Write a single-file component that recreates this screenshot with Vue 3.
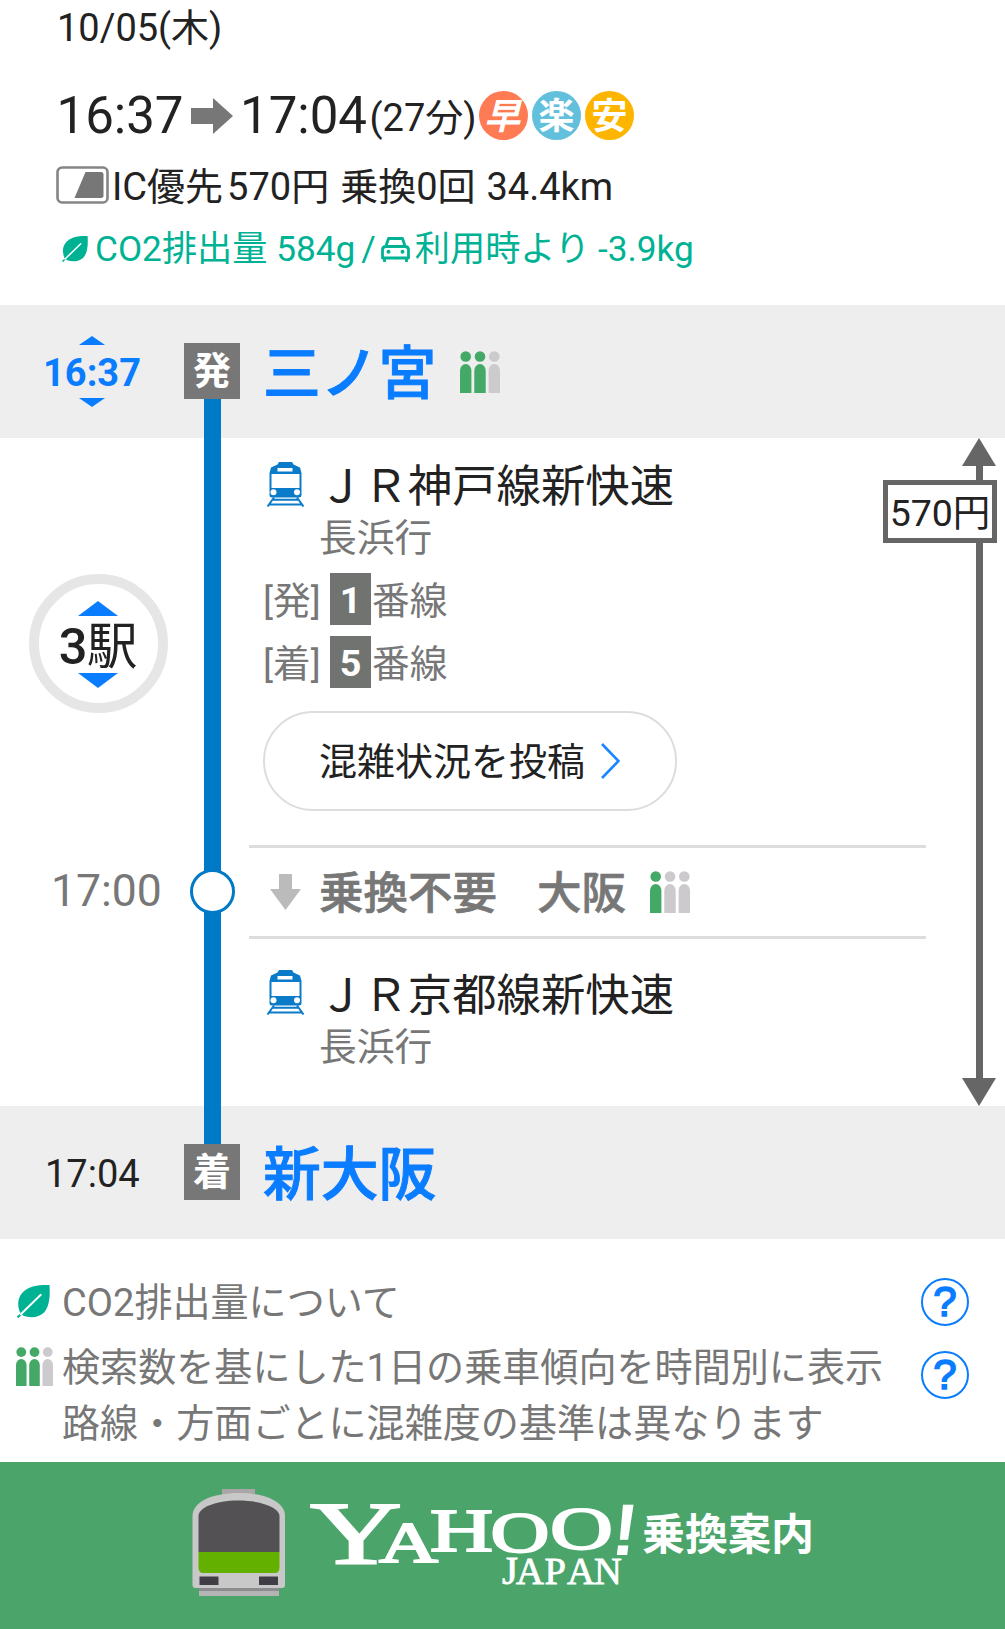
<script setup>
import { h } from 'vue'

const crowdIcon = (props) =>
  h('svg', { viewBox: '0 0 40 42', preserveAspectRatio: 'none' },
    [0, 1, 2].map((i) => {
      const fill = i < props.level ? '#44a866' : '#cccacc'
      const x = i * 14.3
      return h('g', { fill }, [
        h('circle', { cx: x + 5.7, cy: 5.5, r: 5.3 }),
        h('path', { d: `M${x} 42V19.5a5.7 6.5 0 0 1 11.4 0V42Z` }),
      ])
    }))
crowdIcon.props = ['level']

const LeafIcon = () =>
  h('svg', { viewBox: '0 0 33 33' }, [
    h('path', { fill: '#00b294', d: 'M32.500 0C20 -.500 12 1.500 6 7C0 13 .500 21 2.800 27L6 30.500C13 33.500 22 32.500 27 27.500C32.500 21.500 33.200 11 32.500 0Z' }),
    h('path', { stroke: '#00b294', 'stroke-width': 2, d: 'M.6 32.400L5 28.300' }),
    h('path', { stroke: '#fff', 'stroke-width': 1.9, 'stroke-linecap': 'round', d: 'M3.800 29.300L23.800 9.800' }),
  ])

const TrainIcon = () =>
  h('svg', { viewBox: '0 0 39 45' }, [
    h('path', { fill: '#0a7bc9', 'fill-rule': 'evenodd', d: 'M13 0H26L27.500 2.500L34 5.500L35.500 11V33Q35.500 35.500 33 35.500H6Q3.500 35.500 3.500 33V11L5 5.500L11.500 2.500ZM11.500 6V9.500H26.500V6ZM5.500 12V26H33.500V12Z' }),
    h('circle', { cx: 7.5, cy: 30.3, r: 3, fill: '#fff' }),
    h('circle', { cx: 31, cy: 30.3, r: 3, fill: '#fff' }),
    h('path', { fill: 'none', stroke: '#0a7bc9', 'stroke-width': 2, d: 'M8 35.500L1.500 44.500M31 35.500L37.500 44.500M6.500 37.800H32.500M3 42.500H36' }),
  ])

const platforms = [
  { kind: '発', number: 1 },
  { kind: '着', number: 5 },
]

// The wordmark is stretched horizontally, so x is given in unstretched units
const stretch = 1.43
const letters = [
  { c: 'Y', x: 310, y: 1563.5, s: 89 },
  { c: 'A', x: 379, y: 1562, s: 57 },
  { c: 'H', x: 430, y: 1551.5, s: 61 },
  { c: 'O', x: 490.5, y: 1552, s: 57 },
  { c: 'O', x: 550, y: 1549, s: 61 },
]
</script>

<template>
  <div class="page">
    <header class="summary">
      <div class="date">10/05(木)</div>
      <div class="times">
        <span>16:37</span>
        <svg class="to" viewBox="0 0 42 36"><path fill="#777" d="M0 10H22V0L42 18L22 36V26H0Z" /></svg>
        <span>17:04</span>
        <span class="duration">(27分)</span>
        <span class="tag fast">早</span>
        <span class="tag easy">楽</span>
        <span class="tag cheap">安</span>
      </div>
      <div class="fare">
        <svg class="card" viewBox="0 0 53 38">
          <rect x="1.500" y="1.500" width="50" height="35" rx="4.500" fill="#fff" stroke="#858585" stroke-width="2.600" />
          <path fill="#777" d="M29.500 6H45Q47.500 6 47.500 8.500V29.500Q47.500 32 45 32H18.500Z" />
        </svg>
        <span class="ic">IC優先</span><span class="yen">570円</span><span class="change">乗換0回</span><span>34.4km</span>
      </div>
      <div class="co2">
        <LeafIcon class="leaf-small" />
        <span>CO2排出量 584g</span><span class="slash">/</span>
        <svg class="car" viewBox="0 0 29 25" fill="none" stroke="#00b294" stroke-width="2.800" stroke-linejoin="round">
          <path d="M5 9L7.500 1.500H21.500L24 9M1.500 21V13Q1.500 9.500 5 9.500H24Q27.500 9.500 27.500 13V21ZM3.500 21V25M25.500 21V25" />
          <circle cx="7.500" cy="14.800" r="2" fill="#00b294" stroke="none" /><circle cx="21.500" cy="14.800" r="2" fill="#00b294" stroke="none" />
        </svg>
        <span>利用時より</span><span class="diff">-3.9kg</span>
      </div>
    </header>

    <main class="route">
      <div class="rail"></div>
      <section class="stop">
        <div class="stop-time adjustable">
          <svg class="tri" viewBox="0 0 26 9"><path d="M0 9L13 0L26 9Z" /></svg>
          <span>16:37</span>
          <svg class="tri" viewBox="0 0 26 9"><path d="M0 0L13 9L26 0Z" /></svg>
        </div>
        <div class="badge">発</div>
        <div class="station">三ノ宮</div>
        <crowdIcon class="crowd" :level="2" />
      </section>

      <section class="leg">
        <div class="left">
          <div class="stops">
            <svg class="tri-lg" viewBox="0 0 40 15"><path d="M0 15L20 0L40 15Z" /></svg>
            <div class="count"><b>3</b>駅</div>
            <svg class="tri-lg" viewBox="0 0 40 15"><path d="M0 0L20 15L40 0Z" /></svg>
          </div>
          <div class="via-time">17:00</div>
          <div class="node"></div>
        </div>
        <div class="detail">
          <div class="line"><TrainIcon class="train" /><span>ＪＲ神戸線新快速</span></div>
          <div class="bound">長浜行</div>
          <div v-for="p in platforms" :key="p.kind" class="platform">
            <span class="kind">[{{ p.kind }}]</span><b>{{ p.number }}</b><span>番線</span>
          </div>
          <button class="post">
            <span>混雑状況を投稿</span>
            <svg viewBox="0 0 19 36"><path fill="none" stroke="#1a86ff" stroke-width="2.600" d="M1 1L17.500 18L1 35" /></svg>
          </button>
          <div class="through">
            <svg class="down" viewBox="0 0 31 36"><path fill="#bbb" d="M9 0H22V15H31L15.500 36L0 15H9Z" /></svg>
            <span>乗換不要</span><span class="via">大阪</span>
            <crowdIcon class="crowd" :level="1" />
          </div>
          <div class="line second"><TrainIcon class="train" /><span>ＪＲ京都線新快速</span></div>
          <div class="bound">長浜行</div>
        </div>
        <div class="price">
          <svg class="head" viewBox="0 0 34 28"><path d="M0 28L17 0L34 28Z" /></svg>
          <div class="shaft"></div>
          <svg class="head" viewBox="0 0 34 28"><path d="M0 0L17 28L34 0Z" /></svg>
          <div class="amount">570円</div>
        </div>
      </section>

      <section class="stop">
        <div class="stop-time">17:04</div>
        <div class="badge">着</div>
        <div class="station">新大阪</div>
      </section>
    </main>

    <section class="notes">
      <div class="note">
        <LeafIcon class="leaf" />
        <p>CO2排出量について</p>
        <span class="help">?</span>
      </div>
      <div class="note second-note">
        <crowdIcon class="crowd-small" :level="2" />
        <p>検索数を基にした1日の乗車傾向を時間別に表示<br>路線・方面ごとに混雑度の基準は異なります</p>
        <span class="help">?</span>
      </div>
    </section>

    <footer class="brand">
      <svg class="brand-art" viewBox="0 1462 1005 167">
        <rect x="222" y="1489" width="33" height="10" fill="#a8a6a7" />
        <rect x="199" y="1584" width="80" height="12" fill="#b5b4b5" />
        <rect x="199" y="1586" width="80" height="5" fill="#8e8b8e" />
        <path d="M192.500 1585V1516C192.500 1502 212 1493 238.500 1493S285 1502 285 1516V1585Q285 1588 282 1588H195.500Q192.500 1588 192.500 1585Z" fill="#c9c8c9" />
        <path d="M198.500 1552V1516C198.500 1508 215 1500.500 238.500 1500.500S279.500 1508 279.500 1516V1552Z" fill="#545154" />
        <path d="M198.500 1552H279.500V1567Q279.500 1573 275 1573H203Q198.500 1573 198.500 1567Z" fill="#63b000" />
        <rect x="199.500" y="1576.500" width="19" height="8.500" fill="#403d46" />
        <rect x="259" y="1576.500" width="19" height="8.500" fill="#403d46" />
        <text class="logo" :transform="`scale(${stretch} 1)`"><tspan v-for="(l, i) in letters" :key="i" :x="l.x / stretch" :y="l.y" :font-size="l.s">{{ l.c }}</tspan></text>
        <text class="bang" transform="translate(610 1555) skewX(-7)" font-size="73">!</text>
        <text class="japan" y="1584" x="502"><tspan font-size="41">J</tspan><tspan x="516 544.500 567 594" font-size="38.500">APAN</tspan></text>
        <text class="product" x="642" y="1549.500" font-size="43" textLength="172">乗換案内</text>
      </svg>
    </footer>
  </div>
</template>

<style>
body { margin: 0; background: #fff; }
</style>

<style scoped>
.page { width: 1005px; height: 1629px; overflow: hidden; display: flex; flex-direction: column; font-family: Roboto, "Noto Sans CJK JP", sans-serif; font-size: 38px; color: #222; white-space: nowrap; }
svg { display: block; flex: none; }
.summary { height: 305px; padding-left: 57px; box-sizing: border-box; flex: none; }
.date { line-height: 57px; height: 56px; }
.times { display: flex; align-items: center; height: 60px; margin-top: 30px; font-size: 51px; line-height: 60px; margin-left: -.5px; }
.to { width: 42px; height: 36px; margin: 0 7px 0 7.500px; }
.duration { font-size: 38px; padding-top: 3px; line-height: 56px; margin: 0 2.500px; }
.tag { width: 49px; height: 49px; border-radius: 50%; color: #fff; font-size: 36px; font-weight: 700; line-height: 52px; text-align: center; margin: -1px 4px 0 0; }
.fast { background: #ff7b54; font-style: italic; text-indent: -3px; }
.easy { background: #62c0dc; }
.cheap { background: #fdb500; }
.fare { display: flex; align-items: center; height: 40px; margin-top: 21px; line-height: 40px; }
.card { width: 53px; height: 38px; margin: 0 3px 5px -1px; }
.yen { margin-left: 4px; }
.change { margin: 0 11px 0 11px; }
.co2 { display: flex; align-items: center; height: 40px; margin-top: 22px; line-height: 40px; font-size: 35.200px; color: #00b294; }
.leaf-small { width: 26px; height: 26px; margin: 0 7px 1px 5px; }
.slash { margin: 0 5px 0 6px; }
.car { width: 29px; height: 25px; margin-right: 5px; }
.diff { margin-left: 8px; }

.route { position: relative; flex: none; }
.rail { position: absolute; left: 204px; top: 94px; width: 17px; height: 745px; background: #007ac6; }
.stop { display: flex; align-items: center; height: 133px; background: #eee; }
.stop-time { width: 184px; line-height: 40px; padding: 3px 0 0 45px; box-sizing: border-box; }
.adjustable { display: flex; flex-direction: column; align-items: center; padding: 0; color: #0a7cff; font-weight: 700; }
.adjustable span { line-height: 49px; padding-top: 4px; }
.tri { width: 26px; height: 9px; fill: #0a7cff; }
.stop .badge { width: 56px; height: 56px; background: #777; color: #fff; font-weight: 700; line-height: 57px; text-align: center; margin-bottom: 1px; }
.station { font-size: 57.800px; font-weight: 500; -webkit-text-stroke: .9px #0a7cff; line-height: 66px; padding-top: 5px; color: #0a7cff; margin-left: 23px; }
.crowd { width: 40px; height: 42px; margin-left: 24px; }

.leg { display: flex; height: 668px; }
.left { width: 249px; position: relative; }
.stops { width: 139px; height: 139px; box-sizing: border-box; border: 10px solid #e6e6e6; border-radius: 50%; margin: 136px 0 0 29px; display: flex; flex-direction: column; align-items: center; padding: 17px 1px 0 0; }
.tri-lg { width: 40px; height: 15px; fill: #0a7cff; }
.count { font-size: 50.500px; height: 57px; line-height: 62px; letter-spacing: -.3px; }
.count b { font-weight: 500; }
.via-time { font-size: 44.500px; color: #777; line-height: 60px; margin: 148px 0 0 51px; }
.node { position: absolute; left: 190px; top: 431px; width: 39px; height: 39px; border: 3px solid #007ac6; border-radius: 50%; background: #fff; }
.detail { width: 677px; }
.line { display: flex; height: 56px; margin-top: 19px; font-size: 44.400px; line-height: 60px; }
.train { width: 39px; height: 45px; margin: 5px 14px 0 17px; }
.bound { color: #777; line-height: 48px; height: 46px; margin: 1px 0 0 70px; font-size: 37.700px; }
.platform { display: flex; height: 52px; line-height: 56px; margin: 11px 0 0 14px; color: #777; font-size: 37.700px; }
.bound + .platform { margin-top: 13px; }
.platform b { width: 41px; height: 52px; line-height: 54px; background: #717371; color: #fff; text-align: center; margin-right: 1px; }
.kind { width: 67px; }
.post { display: flex; align-items: center; width: 414px; height: 100px; margin: 23px 0 0 14px; padding: 0 0 0 54px; border: 2.500px solid #ddd; border-radius: 50px; background: #fff; color: #222; font: inherit; }
.post span { line-height: 50px; padding-top: 2px; }
.post svg { width: 19px; height: 36px; margin-left: 16px; }
.through { height: 94px; box-sizing: border-box; margin-top: 34px; border: solid #ddd; border-width: 3px 0; display: flex; align-items: center; font-size: 44.500px; font-weight: 500; -webkit-text-stroke: .7px #777; line-height: 60px; color: #777; }
.through span { padding-top: 3px; }
.via { margin-left: 40px; }
.down { width: 31px; height: 36px; margin: 0 18px 0 21px; }
.through .crowd { margin-left: 23.500px; }
.line.second { margin-top: 27px; }
.second .train { margin-top: 4px; }
.price { position: relative; width: 79px; display: flex; flex-direction: column; align-items: center; }
.head { width: 34px; height: 28px; fill: #666; margin-left: 27px; }
.shaft { width: 7px; flex: 1; background: #666; margin-left: 27px; }
.amount { position: absolute; left: -43px; top: 42px; width: 114px; height: 63px; box-sizing: border-box; border: 5.500px solid #666; background: #fff; text-align: center; line-height: 57px; font-size: 37.500px; }

.notes { flex: none; height: 223px; color: #777; padding-top: 36px; box-sizing: border-box; }
.note { display: flex; align-items: flex-start; position: relative; }
.note p { margin: 0; width: 859px; line-height: 56px; font-size: 38.100px; }
.leaf { width: 33px; height: 33px; margin: 10px 12px 0 17px; }
.crowd-small { width: 37px; height: 39px; margin: 7px 9px 0 16px; }
.second-note { margin-top: 9px; }
.help { width: 48px; height: 48px; box-sizing: border-box; border: 2.500px solid #0a7cff; border-radius: 50%; color: #0a7cff; font: 400 42px/44px "Liberation Sans", sans-serif; -webkit-text-stroke: 1.600px #0a7cff; text-align: center; margin-top: 3px; }
.second-note .help { margin-top: 10.500px; }
.brand { flex: none; background: #4ba56b; }
.brand-art { width: 1005px; height: 167px; }
.logo { fill: #fff; stroke: #fff; stroke-width: 1.900px; font-family: "Liberation Serif", serif; }
.bang { fill: #fff; font-family: "Liberation Sans", sans-serif; font-weight: 700; }
.japan { fill: #fff; stroke: #fff; stroke-width: .8px; font-family: "Liberation Serif", serif; }
.product { fill: #fff; font-family: "Noto Sans CJK JP", sans-serif; font-weight: 700; }
</style>
